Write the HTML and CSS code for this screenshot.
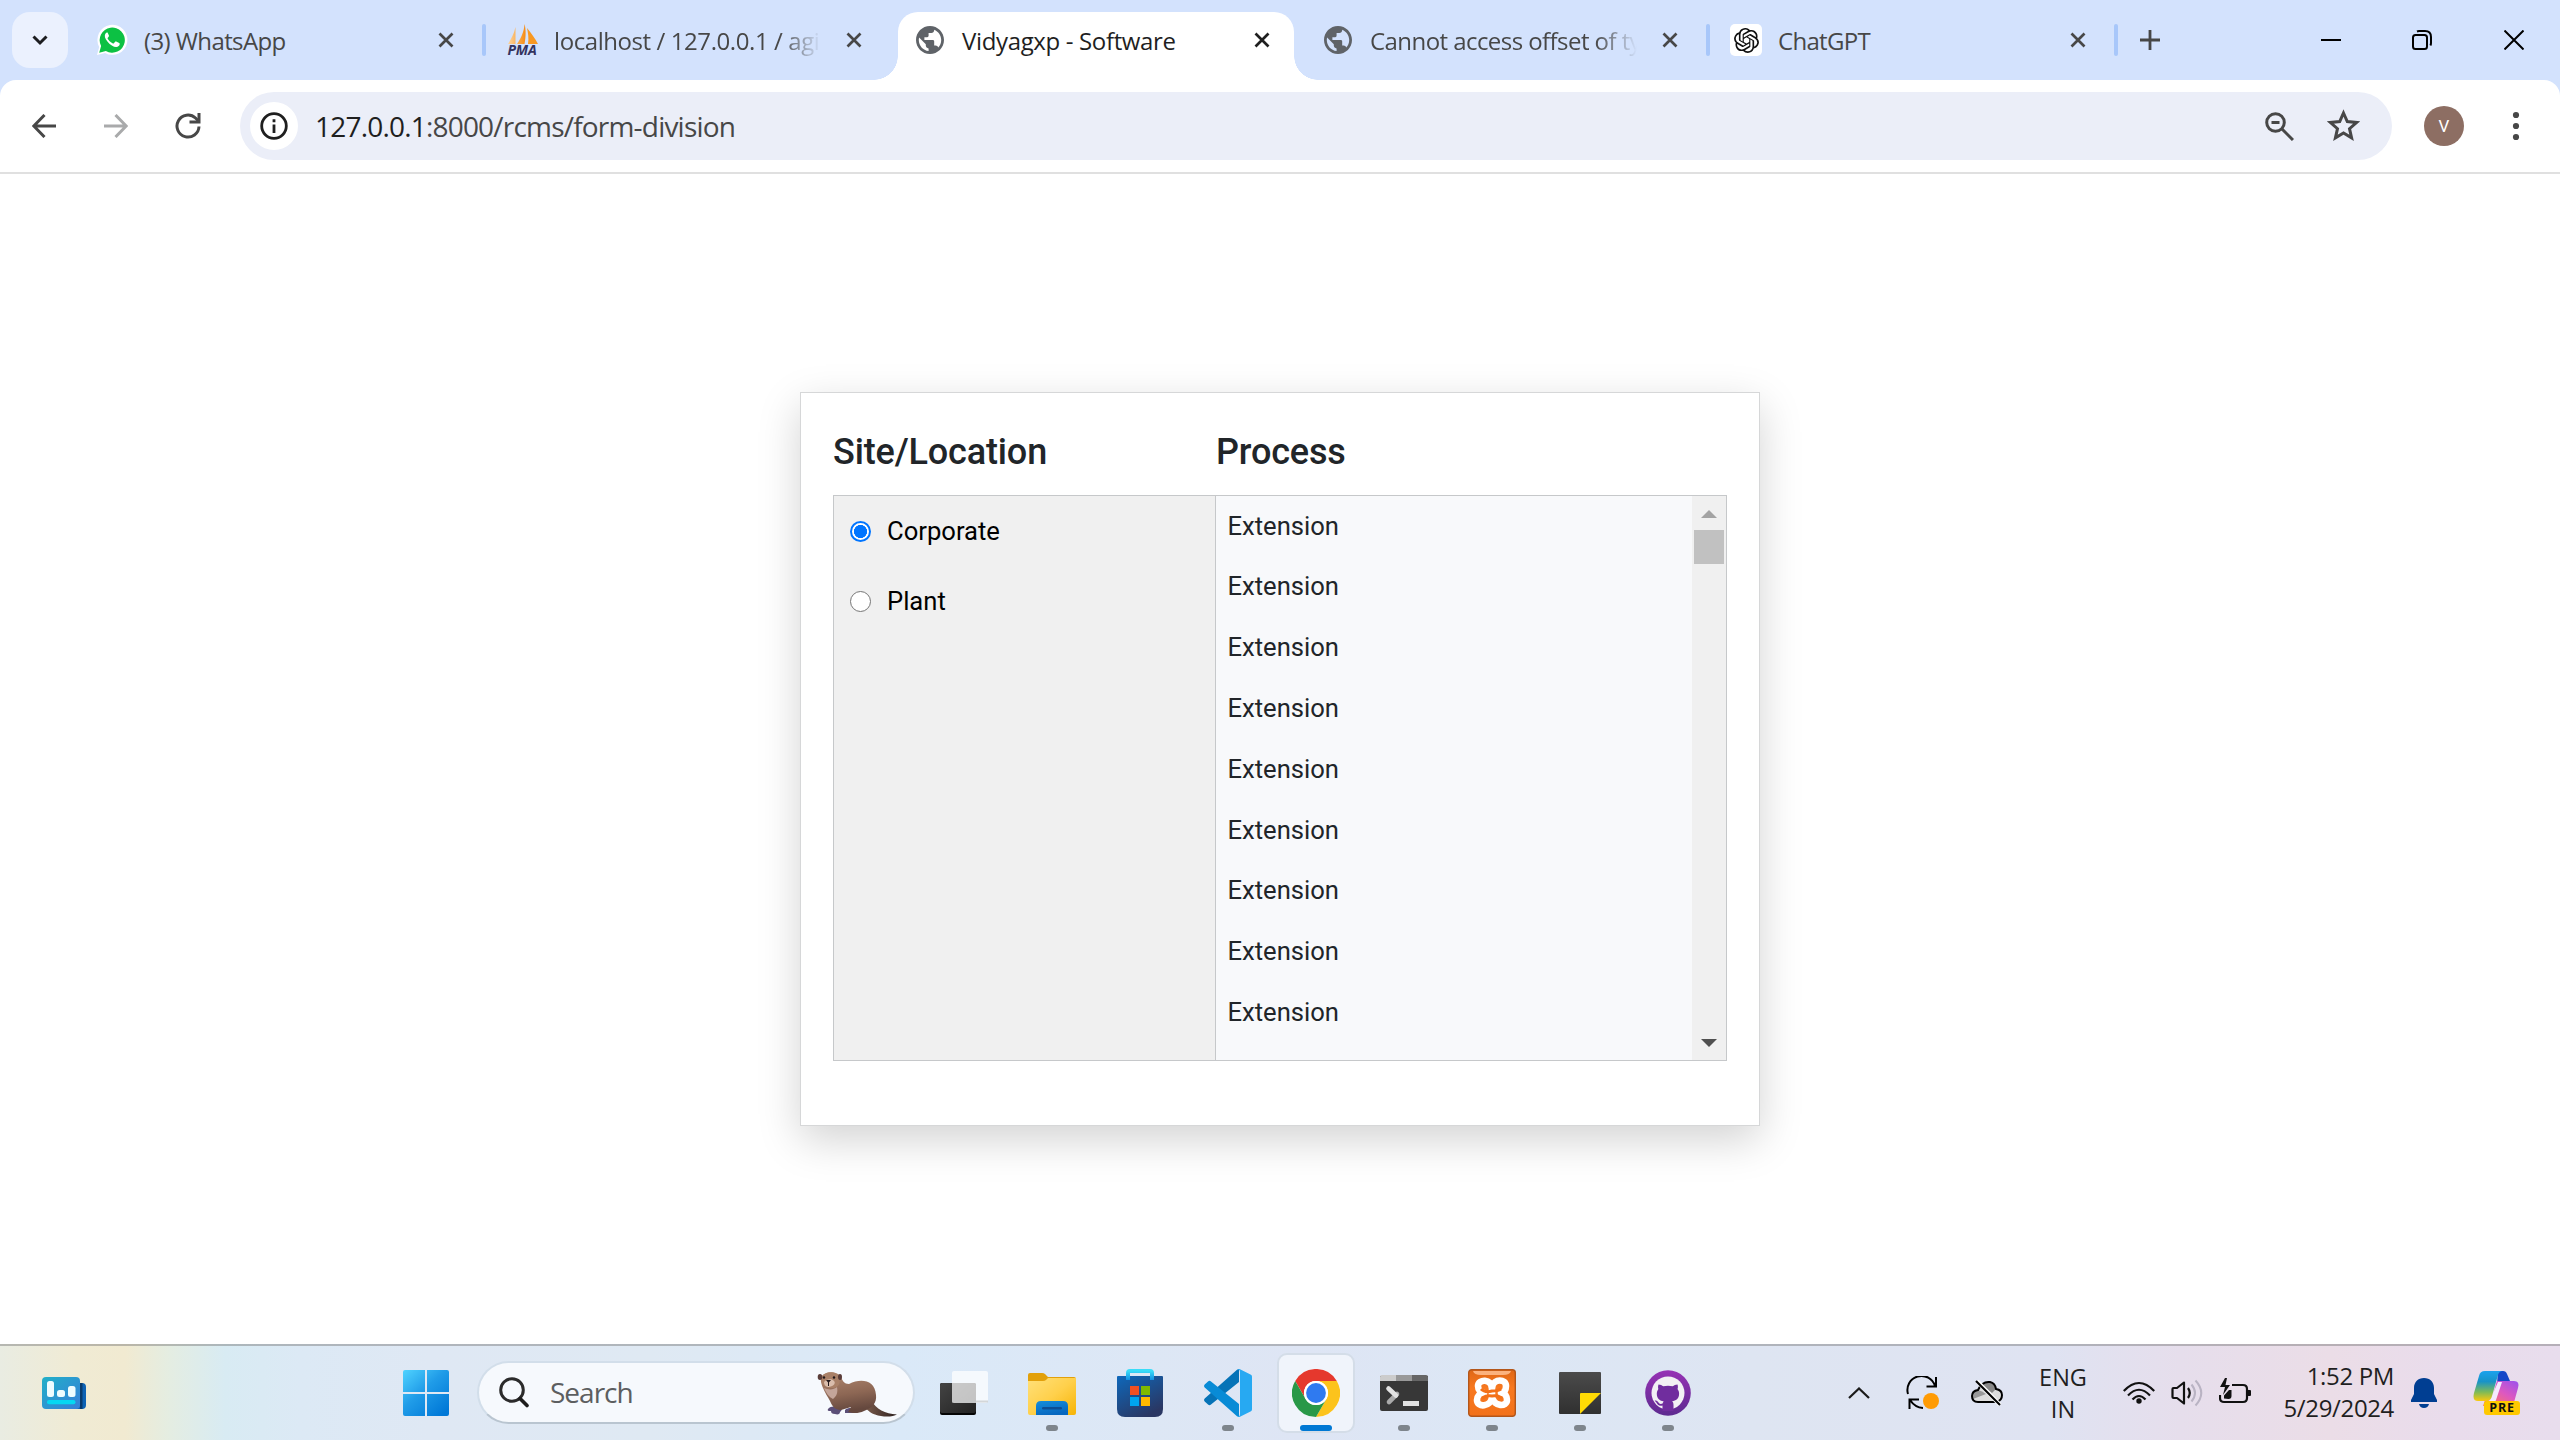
FILE: index.html
```html
<!DOCTYPE html>
<html lang="en">
<head>
<meta charset="utf-8">
<title>Vidyagxp - Software</title>
<link rel="stylesheet" href="styles.css">
</head>
<body>
<svg class="defs" width="0" height="0" aria-hidden="true">
  <symbol id="x" viewBox="0 0 16 16"><path d="M1.5 1.5l13 13M14.5 1.5l-13 13" fill="none" stroke="currentColor" stroke-width="2.7"/></symbol>
  <symbol id="globe" viewBox="2 2 20 20"><path fill="currentColor" d="M12 2C6.48 2 2 6.48 2 12s4.480 10 10 10 10-4.480 10-10S17.520 2 12 2zM4 12c0-.61.08-1.210.21-1.780L8.990 15v1c0 1.100.9 2 2 2v1.930C7.060 19.430 4 16.070 4 12zm13.890 5.400c-.26-.81-1-1.400-1.900-1.400h-1v-3c0-.55-.45-1-1-1h-6v-2h2c.55 0 1-.45 1-1V7h2c1.100 0 2-.9 2-2v-.41C17.920 5.770 20 8.650 20 12c0 2.080-.81 3.980-2.110 5.400z"/></symbol>
</svg>

<header class="tabstrip">
  <button class="tab-search"><svg width="16" height="11" viewBox="0 0 16 11"><path d="M1.500 1.500L8 8l6.500-6.500" fill="none" stroke="#1c1d20" stroke-width="3"/></svg></button>
  <div class="tab first">
    <span class="favicon"><svg width="32" height="32" viewBox="0 0 32 32"><path d="M1 31l2.200-8A15 15 0 1 1 9 28.900z" fill="#fff"/><path d="M3.200 28.800l1.900-6.800A12.600 12.600 0 1 1 9.900 27z" fill="#0cc143"/><path d="M11.200 8.500c-.6 0-1.300.4-1.800 1.200-1.200 2-.6 4.500 2 7.800 3 3.700 6.200 5.600 8.900 5.500 1.900-.1 3.300-1.500 3.400-2.700.1-.8 0-1-.5-1.300l-3-1.500c-.6-.2-.9-.1-1.300.4l-1 1.300c-.4.4-.8.4-1.400.1-2.300-1.100-3.700-2.600-4.800-4.500-.2-.5-.1-.8.300-1.200l.8-1.100c.3-.4.200-.8 0-1.200l-1-2.300c-.2-.5-.4-.6-.6-.5z" fill="#fff"/></svg></span>
    <span class="tab-title t-wa">(3) WhatsApp</span>
    <svg class="close" width="16" height="16"><use href="#x"/></svg>
    <i class="sep"></i>
  </div>
  <div class="tab">
    <span class="favicon pma"><svg width="32" height="20" viewBox="0 0 32 20"><defs><linearGradient id="sail"><stop stop-color="#fcd5a0"/><stop offset="1" stop-color="#f68b12"/></linearGradient></defs><path d="M1 20C4 15 7 10 8.500 3v17zM10 20C14 14 17 8 17.500 0c1.500 5 1.500 13 0 20z" fill="url(#sail)"/><path d="M20 4c4 5 8 10 11 16H21c1-6 0-11-1-16z" fill="#f89822"/></svg><b>PMA</b></span>
    <span class="tab-title fade t-pma">localhost / 127.0.0.1 / agi</span>
    <svg class="close" width="16" height="16"><use href="#x"/></svg>
  </div>
  <div class="tab active">
    <span class="favicon"><svg width="28" height="28"><use href="#globe"/></svg></span>
    <span class="tab-title t-vid">Vidyagxp - Software</span>
    <svg class="close" width="16" height="16"><use href="#x"/></svg>
  </div>
  <div class="tab">
    <span class="favicon"><svg width="28" height="28"><use href="#globe"/></svg></span>
    <span class="tab-title fade t-can">Cannot access offset of ty</span>
    <svg class="close" width="16" height="16"><use href="#x"/></svg>
    <i class="sep"></i>
  </div>
  <div class="tab">
    <span class="favicon gpt"><svg width="25" height="25" viewBox="0 0 24 24"><path fill="#111" d="M22.282 9.821a5.985 5.985 0 0 0-.516-4.910 6.046 6.046 0 0 0-6.510-2.900A6.065 6.065 0 0 0 4.981 4.182a5.985 5.985 0 0 0-3.998 2.900 6.046 6.046 0 0 0 .743 7.097 5.980 5.980 0 0 0 .511 4.911 6.051 6.051 0 0 0 6.515 2.900A5.985 5.985 0 0 0 13.260 24a6.056 6.056 0 0 0 5.772-4.206 5.990 5.990 0 0 0 3.998-2.900 6.056 6.056 0 0 0-.747-7.073zM13.260 22.430a4.476 4.476 0 0 1-2.876-1.040l.141-.081 4.779-2.758a.795.795 0 0 0 .392-.681v-6.737l2.020 1.168a.071.071 0 0 1 .038.052v5.583a4.504 4.504 0 0 1-4.494 4.494zM3.600 18.304a4.470 4.470 0 0 1-.535-3.014l.142.085 4.783 2.759a.771.771 0 0 0 .780 0l5.843-3.369v2.332a.080.080 0 0 1-.033.062L9.740 19.950a4.500 4.500 0 0 1-6.140-1.646zM2.341 7.896a4.485 4.485 0 0 1 2.366-1.973V11.600a.766.766 0 0 0 .388.677l5.814 3.354-2.020 1.168a.076.076 0 0 1-.071 0l-4.830-2.786A4.504 4.504 0 0 1 2.341 7.872zm16.596 3.855l-5.833-3.387L15.119 7.200a.076.076 0 0 1 .071 0l4.830 2.791a4.494 4.494 0 0 1-.676 8.105v-5.678a.790.790 0 0 0-.407-.667zm2.010-3.023l-.141-.085-4.774-2.782a.776.776 0 0 0-.785 0L9.409 9.230V6.897a.066.066 0 0 1 .028-.061l4.830-2.787a4.500 4.500 0 0 1 6.680 4.660zm-12.640 4.135l-2.020-1.164a.080.080 0 0 1-.038-.057V6.075a4.500 4.500 0 0 1 7.375-3.453l-.142.080L8.704 5.460a.795.795 0 0 0-.393.681zm1.097-2.365l2.602-1.500 2.607 1.500v2.999l-2.597 1.500-2.607-1.500z"/></svg></span>
    <span class="tab-title t-gpt">ChatGPT</span>
    <svg class="close" width="16" height="16"><use href="#x"/></svg>
    <i class="sep"></i>
  </div>
  <svg class="new-tab" width="20" height="20" viewBox="0 0 20 20"><path d="M10 0v20M0 10h20" stroke="#474747" stroke-width="2.800"/></svg>
  <div class="window-controls">
    <svg width="20" height="20" viewBox="0 0 20 20"><path d="M0 10h20" stroke="#000" stroke-width="2"/></svg>
    <svg width="20" height="20" viewBox="0 0 20 20"><g fill="none" stroke="#000" stroke-width="2"><rect x="1" y="5" width="14" height="14" rx="2.500"/><path d="M5 1.500Q6 1 7 1h6q6 0 6 6v6q0 1.500-.6 2.500"/></g></svg>
    <svg width="20" height="20" viewBox="0 0 20 20"><path d="M.5.5l19 19M19.500.5l-19 19" stroke="#000" stroke-width="2"/></svg>
  </div>
</header>

<div class="toolbar-back">
<nav class="toolbar">
  <svg class="nav-icon" width="24" height="24" viewBox="0 0 24 24"><path d="M24 12H2.500M12.500 1L1.800 12l10.700 11" fill="none" stroke="#474747" stroke-width="3"/></svg>
  <svg class="nav-icon" width="24" height="24" viewBox="0 0 24 24"><path d="M0 12h21.500M11.500 1l10.700 11-10.700 11" fill="none" stroke="#a9aaab" stroke-width="3"/></svg>
  <svg class="nav-icon" width="26" height="26" viewBox="0 0 26 26"><path d="M24 13.500A11 11 0 1 1 20.500 5l3 3" fill="none" stroke="#474747" stroke-width="3"/><path d="M14.500 10.500h11V0h-3v7.500h-8z" fill="#474747"/></svg>
  <div class="omnibox">
    <span class="site-info"><svg width="28" height="28" viewBox="0 0 28 28"><circle cx="14" cy="14" r="12.300" fill="none" stroke="#1f1f1f" stroke-width="2.800"/><path d="M14 12.500V21M14 7.300v3" stroke="#1f1f1f" stroke-width="2.800"/></svg></span>
    <span class="url"><b>127.0.0.1</b>:8000/rcms/form-division</span>
    <svg class="zoom-out" width="29" height="29" viewBox="0 0 29 29"><g fill="none" stroke="#474747" stroke-width="3"><circle cx="10.500" cy="10.500" r="8.800"/><path d="M17 17l11 11M6.500 10.500h8"/></g></svg>
    <svg class="star" width="33" height="32" viewBox="0 0 33 32"><path d="M16.500 4l3.800 8.600 9.200.9-7 6.200 2.100 9.200-8.100-4.900-8.100 4.900 2.100-9.200-7-6.200 9.200-.9z" fill="none" stroke="#474747" stroke-width="3"/></svg>
  </div>
  <span class="avatar">V</span>
  <svg class="menu-dots" width="8" height="30" viewBox="0 0 8 30" fill="#474747"><circle cx="4" cy="4" r="3.100"/><circle cx="4" cy="15" r="3.100"/><circle cx="4" cy="26" r="3.100"/></svg>
</nav>
</div>

<main class="page">
  <section class="card">
    <div class="headings"><h2 class="h-site">Site/Location</h2><h2 class="h-proc">Process</h2></div>
    <div class="panes">
      <div class="sites">
        <label><i class="radio on"></i><span>Corporate</span></label>
        <label><i class="radio"></i><span>Plant</span></label>
      </div>
      <div class="processes">
        <ul><li>Extension</li><li>Extension</li><li>Extension</li><li>Extension</li><li>Extension</li><li>Extension</li><li>Extension</li><li>Extension</li><li>Extension</li></ul>
        <div class="scrollbar">
          <svg width="16" height="8" viewBox="0 0 16 8"><path d="M0 8l8-8 8 8z" fill="#a3a3a3"/></svg>
          <i class="thumb"></i>
          <svg class="down" width="16" height="8" viewBox="0 0 16 8"><path d="M0 0l8 8 8-8z" fill="#505050"/></svg>
        </div>
      </div>
    </div>
  </section>
</main>

<footer class="taskbar">
  <div class="widgets">
    <svg width="44" height="32" viewBox="0 0 44 32"><defs><linearGradient id="wg" x2="1" y2="1"><stop stop-color="#21b0c8"/><stop offset="1" stop-color="#377fd9"/></linearGradient></defs><rect x="26" y="6" width="18" height="26" rx="4" fill="#0d62b4"/><path d="M38 6h2.500v26H38z" fill="#083a6c"/><rect width="38" height="32" rx="4" fill="url(#wg)"/><g fill="#effcff"><rect x="5" y="4" width="7" height="16" rx="2.500"/><rect x="15" y="13" width="8" height="7" rx="2.500"/><rect x="26" y="9" width="7.500" height="11" rx="2.500"/></g><rect x="5" y="23" width="28.500" height="4.300" rx="2" fill="#06d7f2"/></svg>
  </div>
  <svg class="start" width="46" height="46" viewBox="0 0 46 46"><defs><linearGradient id="win" gradientUnits="userSpaceOnUse" x1="0" y1="0" x2="40" y2="44"><stop stop-color="#50d3ff"/><stop offset=".48" stop-color="#209ce8"/><stop offset="1" stop-color="#0078d7"/></linearGradient></defs><path d="M2 0h20v22H0V2q0-2 2-2zM24 0h20q2 0 2 2v20H24zM0 24h22v22H2q-2 0-2-2zM24 24h22v20q0 2-2 2H24z" fill="url(#win)"/></svg>
  <div class="search">
    <svg width="30" height="31" viewBox="0 0 30 31"><circle cx="13" cy="13" r="11.300" fill="none" stroke="#2b2b2b" stroke-width="3"/><path d="M21 21.500l7 7" stroke="#1d1d1d" stroke-width="3.600" stroke-linecap="round"/></svg>
    <span class="search-text">Search</span>
    <svg class="otter" width="82" height="46" viewBox="0 0 82 46"><defs><linearGradient id="fur" x2=".2" y2="1"><stop stop-color="#b18972"/><stop offset=".6" stop-color="#8d6754"/><stop offset="1" stop-color="#65483e"/></linearGradient><linearGradient id="tail"><stop stop-color="#80604f"/><stop offset="1" stop-color="#2e211f"/></linearGradient></defs><path d="M54 29c5 9 14 14 26 14.500-4 2.500-14 3-22 0-6-2-9-6-12-10z" fill="url(#tail)"/><path d="M11 38c3-3 7-3 10-1 4-1 5 2 2 4 0 2-2 3-5 2-3 0-4-1-4-3-2 0-4 0-3-2zM28 39c3-3 8-2 12-1 1 2-1 4-4 4h-8z" fill="#5b4f78"/><path d="M5 5C9 0 20 0 23 5c3 5 4 8 9 8 12-6 26-4 27 11 1 8-4 13-12 16-6 3-12 2-16 1l3-5-10 3c-6 0-9-4-11-9-2-4-5-8-7-13C4 12 3 9 5 5z" fill="url(#fur)"/><path d="M7 17c4 2 10 2 13-1 1 5 0 9-4 12-4-2-7-6-9-11z" fill="#c4a599"/><path d="M4 7C7 0 20-1 22 7c2 6-1 10-7 10C8 17 4 13 4 7z" fill="#a98067"/><ellipse cx="3" cy="6" rx="2.300" ry="3" fill="#593c38"/><ellipse cx="23" cy="6" rx="2" ry="3" fill="#593c38"/><path d="M7 11c2-3 8-4 10-1 2 2 0 5-5 6-3 0-5-2-5-5z" fill="#d9bdac"/><path d="M9 9h5l-2.500 3zM11 11h1v4h-1z" fill="#241a1c"/><circle cx="7" cy="6.500" r="1.200" fill="#211719"/><circle cx="17" cy="6.500" r="1.200" fill="#211719"/></svg>
  </div>

  <div class="apps">
    <div class="app"><svg width="48" height="48" viewBox="0 0 48 48"><defs><linearGradient id="tv" x2="1" y2="1"><stop stop-color="#444"/><stop offset="1" stop-color="#222"/></linearGradient></defs><rect y="14" width="36" height="32" rx="2" fill="#050505"/><rect y="14" width="36" height="30" rx="2" fill="url(#tv)"/><rect x="12" y="2" width="36" height="32" rx="2" fill="#fff" fill-opacity=".72"/><path d="M12 32.500h36" stroke="#c5c7c9" stroke-opacity=".7" stroke-width="2"/></svg></div>
    <div class="app open"><svg width="48" height="48" viewBox="0 0 48 48"><defs><linearGradient id="fo" x2="1" y2="1"><stop stop-color="#ffe07a"/><stop offset=".5" stop-color="#ffd04b"/><stop offset="1" stop-color="#f6b406"/></linearGradient><linearGradient id="fb" x2=".4" y2="1"><stop stop-color="#158edc"/><stop offset="1" stop-color="#0768c0"/></linearGradient></defs><path d="M0 6q0-2 2-2h12q2 0 3 1l3 3h26q2 0 2 2v5H0z" fill="#e2a00a"/><path d="M0 12h15q2 0 3-1l2-2h28v35q0 2-2 2H2q-2 0-2-2z" fill="url(#fo)"/><path d="M8 46V37q0-5 5-5h22q5 0 5 5v9z" fill="url(#fb)"/><rect x="14" y="38" width="20" height="2.400" rx="1.200" fill="#0d4e94"/></svg></div>
    <div class="app"><svg width="48" height="48" viewBox="0 0 48 48"><defs><linearGradient id="st" x2=".6" y2="1"><stop stop-color="#0e68bb"/><stop offset="1" stop-color="#2a3763"/></linearGradient><linearGradient id="ha" x2="0" y2="1"><stop stop-color="#3adcf8"/><stop offset="1" stop-color="#0f8fe4"/></linearGradient></defs><path d="M2 7h44q1 0 1 1v32q0 8-8 8H9q-8 0-8-8V8q0-1 1-1z" fill="url(#st)"/><path d="M12 11V4q0-2 2-2h20q2 0 2 2v7" fill="none" stroke="url(#ha)" stroke-width="4"/><path d="M14 17h9v9h-9z" fill="#f25022"/><path d="M25 17h9v9h-9z" fill="#7fba00"/><path d="M14 28h9v9h-9z" fill="#00a4ef"/><path d="M25 28h9v9h-9z" fill="#ffb900"/></svg></div>
    <div class="app open"><svg width="48" height="48" viewBox="0 0 48 48"><path d="M35 0v13L7 35.500q-1.500 1.500-3 0L.7 32.500q-1.300-1.500 0-3L33 .8z" fill="#0673b7"/><path d="M35 48V35L7 12.500q-1.500-1.500-3 0L.7 15.500q-1.300 1.500 0 3L33 47.200z" fill="#088bd6"/><path d="M33 .7Q34.500-.5 36 .2l11 5.500q1 .5 1 2v32.600q0 1.500-1 2l-11 5.500q-1.500.7-3-.5 3 1 3-2.300V3Q36 0 33 .7z" fill="#27a9f2"/></svg></div>
    <div class="app current"><svg width="48" height="48" viewBox="0 0 48 48"><circle cx="24" cy="24" r="24" fill="#fff"/><path d="M3.200 12A24 24 0 0 1 44.800 12H24a12 12 0 0 0-10.400 18z" fill="#e5382d"/><path d="M44.800 12A24 24 0 0 1 24 48l10.400-18A12 12 0 0 0 24 12z" fill="#fcc31c"/><path d="M24 48A24 24 0 0 1 3.200 12l10.400 18a12 12 0 0 0 20.800 0z" fill="#299848"/><circle cx="24" cy="24" r="12" fill="#fff"/><circle cx="24" cy="24" r="9.900" fill="#2f7af0"/></svg></div>
    <div class="app open"><svg width="48" height="48" viewBox="0 0 48 48"><path d="M0 7h48v33q0 2-2 2H2q-2 0-2-2z" fill="#373737"/><path d="M0 12V8q0-2 2-2h14v6z" fill="#ccc"/><path d="M16 6h16v6H16z" fill="#999"/><path d="M32 6h14q2 0 2 2v4H32z" fill="#666"/><path d="M9 33l8-8" stroke="#aaa" stroke-width="4.600" stroke-linecap="round"/><path d="M8.500 19.500l7.500 7" stroke="#e2e2e2" stroke-width="4.600" stroke-linecap="round"/><path d="M23 32h16v5H23z" fill="#e2e2e2"/></svg></div>
    <div class="app open"><svg width="48" height="48" viewBox="0 0 48 48"><defs><linearGradient id="xa" x2="0" y2="1"><stop stop-color="#df6716"/><stop offset=".4" stop-color="#f87920"/><stop offset="1" stop-color="#f2711a"/></linearGradient></defs><rect x=".7" y=".7" width="46.600" height="46.600" rx="3" fill="url(#xa)" stroke="#b3561a" stroke-width="1.400"/><path d="M5 2h38q-1 4-8 4H13Q6 6 5 2z" fill="#fbb27e"/><g fill="none" stroke="#fff" stroke-width="6.600" stroke-linecap="round" stroke-linejoin="round"><path d="M24 20c0-11-14-10-14-3 0 4 3 7 6 7-4 0-7 3-7 7 0 8 14 7 15-3V18"/><path d="M24 18c2-9 14-8 14-1 0 4-2 7-5 7 4 0 6 3 6 7 0 7-13 7-15-3"/></g><path d="M13 20q4 4 11 2 6 0 9-2M14 29q5-3 10-2 5-1 10 2" fill="none" stroke="#f37118" stroke-width="3"/></svg></div>
    <div class="app open"><svg width="48" height="48" viewBox="0 0 48 48"><defs><linearGradient id="sn" x2="0" y2="1"><stop stop-color="#4b4b4b"/><stop offset="1" stop-color="#303030"/></linearGradient></defs><path d="M4 3h40q1 0 1 1v40q0 1-1 1H4q-1 0-1-1V4q0-1 1-1z" fill="url(#sn)"/><path d="M24 45V25q0-1 1-1h20z" fill="#ffda05"/></svg></div>
    <div class="app open"><svg width="46" height="46" viewBox="0 0 46 46"><defs><linearGradient id="gh" x2="0" y2="1"><stop stop-color="#9732b5"/><stop offset="1" stop-color="#5d2a90"/></linearGradient></defs><circle cx="23" cy="23" r="22.800" fill="url(#gh)"/><circle cx="23" cy="23" r="16.500" fill="#f2f0f4"/><path d="M13.500 14.500c2 0 3.500.9 4.800 1.800q4.700-1 9.400 0c1.300-.9 2.800-1.800 4.800-1.800.6 1.800.5 3.500 0 4.600 1.200 1.500 1.600 3 1.600 4.700 0 5.300-3.300 7-7 7.500 1 1 1.400 2 1.400 3.800V41h-11v-5.500c-3.800.8-5-1-6-2.800-.6-1-1.500-1.500-1.800-2 2-.8 3 .8 4 2 .9 1.200 2 1.500 3.900.9.100-1 .6-1.700 1.100-2.200-3.700-.5-6.900-2.300-6.900-7.600 0-1.700.5-3.200 1.600-4.700-.5-1.100-.5-2.800.1-4.600z" fill="#702d9e"/></svg></div>
  </div>

  <div class="tray">
    <span class="cell"><svg width="22" height="12" viewBox="0 0 22 12"><path d="M1 11L11 1.500 21 11" fill="none" stroke="#1b1b1b" stroke-width="2.200"/></svg></span>
    <span class="cell"><svg width="34" height="34" viewBox="0 0 34 34"><path d="M2 18A14 14 0 0 1 29 10M30 1v9.500H20.500M3.500 33v-9.500H13M4 24q5 7.500 13 8" fill="none" stroke="#000" stroke-width="2"/><circle cx="25" cy="25" r="8" fill="#ff9b05"/></svg></span>
    <span class="cell"><svg width="32" height="26" viewBox="0 0 32 26"><path d="M7 22q-6 0-6-6 0-5 6-6Q11 1 19 2q5 1 6 7 6 1 6 6t-5 7z" fill="#ddd"/><path d="M2 19Q0 12 7 10q4 1 8 4z" fill="#999"/><path d="M11 5Q20-2 25 9l-4 4z" fill="#888"/><path d="M7 22q-6 0-6-6 0-5 6-6Q11 1 19 2q5 1 6 7 6 1 6 6t-5 7z" fill="none" stroke="#000" stroke-width="2"/><path d="M6 1l23 24" stroke="#fff" stroke-width="4"/><path d="M5 1l24 24" stroke="#000" stroke-width="2.200"/></svg></span>
    <span class="lang"><span class="l1">ENG</span><span class="l2">IN</span></span>
    <span class="cell"><svg width="32" height="24" viewBox="0 0 32 24"><g fill="none" stroke="#111" stroke-width="2.200"><path d="M.8 10Q16-6 31.200 10M5 14.500q11-11.500 22 0M9.500 18.500q6.500-7 13 0"/></g><circle cx="16" cy="20" r="2.700" fill="#111"/></svg></span>
    <svg width="32" height="28" viewBox="0 0 32 28"><path d="M1.500 10v8q0 1 1 1H6l7 5.500V3.500L6 9H2.500q-1 0-1 1z" fill="none" stroke="#111" stroke-width="2.200" stroke-linejoin="round"/><path d="M17 9q3.500 5 0 10" fill="none" stroke="#111" stroke-width="2.200"/><path d="M20.500 5.500q7 8.500 0 17M24.500 1.500q11.500 12.500 0 25" fill="none" stroke="#b9b3c3" stroke-width="2"/></svg>
    <svg class="battery" width="32" height="26" viewBox="0 0 32 26"><path d="M13 7h11q4 0 4 4v9q0 4-4 4H5q-4 0-4-4v-3" fill="none" stroke="#111" stroke-width="2.200"/><path d="M28 12h3q1 0 1 1v4q0 1-1 1h-3zM5 20.500v-3L10 12h2.500v6q0 3-3 3zM6 0L1 9h5l-2 8L11 7H6.500L8 0z" fill="#111"/></svg>
    <span class="clock"><span class="c1">1:52 PM</span><span class="c2">5/29/2024</span></span>
    <svg class="bell" width="26" height="30" viewBox="0 0 26 30"><path d="M13 0c6 0 10 4 10 10v6l3 6v2H0v-2l3-6v-6C3 4 7 0 13 0zM8 26h10q-1 4-5 4t-5-4z" fill="#003e92"/></svg>
    <span class="copilot"><svg width="47" height="46" viewBox="0 0 47 46"><defs><linearGradient id="co" x2="0" y2="1"><stop stop-color="#1ba2ee"/><stop offset=".35" stop-color="#1893c8"/><stop offset=".7" stop-color="#7dba58"/><stop offset="1" stop-color="#fbc90d"/></linearGradient><linearGradient id="cp" x1="1" x2=".2" y2="1"><stop stop-color="#9b51ee"/><stop offset=".5" stop-color="#dd58c0"/><stop offset="1" stop-color="#ff795a"/></linearGradient></defs><path d="M25 1h5q3 0 4 3l3 7h-8l-5 3z" fill="#1547c8"/><path d="M24 11h17q6 0 4 7l-5 18H10l2-6h4q3 0 4-4l3-12z" fill="url(#cp)"/><path d="M25 12h4l-6 18q-1 3-4 3l-5-2q3 0 4-3z" fill="#f5eaff"/><path d="M12 1h18q-4 0-5 4l-6 21q-1 5-6 5H5q-6 0-4-8L6 6q1-5 6-5z" fill="url(#co)"/></svg><b class="pre">PRE</b></span>
  </div>
</footer>
</body>
</html>
```
FILE: styles.css
```css
* { box-sizing: border-box; }
body {
  margin: 0; width: 2560px; height: 1440px; overflow: hidden;
  display: flex; flex-direction: column;
  background: #fff; color: #1f1f1f;
  font-family: "Open Sans", "Noto Sans", sans-serif;
}
svg { display: block; flex: none; }
.defs { position: absolute; }

/* Tab strip */
.tabstrip { flex: none; height: 80px; background: #d3e2fd; display: flex; align-items: center; padding-left: 12px; }
.tab-search { width: 56px; height: 56px; margin: 0 14px 0 0; border: 0; border-radius: 18px; background: #ebf1fe; display: flex; align-items: center; justify-content: center; }
.tab { position: relative; width: 408px; height: 68px; margin-top: 12px; padding: 0 0 12px 16px; display: flex; align-items: center; color: #474747; }
.favicon { width: 32px; height: 32px; margin-right: 16px; flex: none; display: flex; align-items: center; justify-content: center; color: #5f6368; }
.gpt { background: #fff; border-radius: 5px; }
.first { padding-left: 14px; }
.first .close { margin-left: 26px; }
.pma { flex-direction: column; justify-content: flex-start; }
.pma svg { margin-left: 2px; }
.pma b { font: italic 700 14px/12px "Open Sans", sans-serif; color: #33335f; letter-spacing: -.2px; }
.tab-title { width: 268px; padding-top: 2px; font-size: 24px; line-height: 34px; white-space: nowrap; }
.t-wa { letter-spacing: -.6px; }
.t-pma { letter-spacing: -.42px; }
.t-vid { letter-spacing: -.35px; }
.t-can { letter-spacing: -.56px; }
.t-gpt { letter-spacing: -.7px; }
.fade { -webkit-mask-image: linear-gradient(90deg, #000 225px, transparent 267px); mask-image: linear-gradient(90deg, #000 225px, transparent 267px); }
.close { margin-left: 24px; color: #474747; }
.sep { width: 4px; height: 32px; border-radius: 2px; background: #a8c7fa; margin-left: 28px; }
.active { width: 396px; margin-right: 12px; background: #fff; border-radius: 20px 20px 0 0; color: #1f1f1f; }
.active .close { color: #1f1f1f; }
.active::before, .active::after { content: ""; position: absolute; bottom: 0; width: 24px; height: 24px; }
.active::before { left: -24px; background: radial-gradient(circle at 0 0, transparent 23.5px, #fff 24px); }
.active::after { right: -24px; background: radial-gradient(circle at 100% 0, transparent 23.5px, #fff 24px); }
.new-tab { margin-left: 18px; }
.window-controls { margin-left: auto; margin-right: 36px; display: flex; gap: 72px; }
.window-controls svg:first-child { margin-right: -1px; }

/* Toolbar */
.toolbar-back { flex: none; background: #d3e2fd; }
.toolbar { height: 94px; padding: 0 40px 0 32px; background: #fff; border-bottom: 2px solid #e0e0e0; border-radius: 16px 16px 0 0; display: flex; align-items: center; }
.nav-icon { margin-right: 48px; }
.nav-icon + .nav-icon { margin-right: 47px; }
.nav-icon + .nav-icon + .nav-icon { margin-right: 39px; }
.omnibox { width: 2152px; height: 68px; border-radius: 34px; background: #ebeef8; display: flex; align-items: center; padding-left: 10px; }
.site-info { width: 48px; height: 48px; border-radius: 50%; background: #fff; display: flex; align-items: center; justify-content: center; }
.url { margin-left: 17px; font-size: 28px; line-height: 40px; letter-spacing: -.8px; color: #474747; white-space: nowrap; }
.url b { font-weight: 400; color: #1f1f1f; }
.zoom-out { margin-left: auto; }
.star { margin: 0 32px 2px 33px; }
.avatar { width: 40px; height: 40px; margin: 0 auto 0 32px; border-radius: 50%; background: #8d6e63; color: #fff; font: 17px/40px Roboto, sans-serif; text-align: center; }

/* Page */
.page { flex: 1; padding-top: 218px; display: flex; justify-content: center; align-items: flex-start; }
.card { width: 960px; height: 734px; padding: 35px 32px 0; border: 1px solid #d6d7d8; background: #fff; box-shadow: 0 14px 40px rgba(0,0,0,.175); font-family: Roboto, sans-serif; }
.headings { display: grid; grid-template-columns: 383px 1fr; height: 67px; }
h2 { margin: 0; font-size: 36px; line-height: 49px; letter-spacing: -.15px; font-weight: 500; color: #212529; white-space: nowrap; }
.panes { height: 566px; border: 1px solid #c6c8ca; display: grid; grid-template-columns: 381px 1fr; }
.sites { background: #f0f0f0; padding: 0 0 0 16px; color: #000; font-size: 25.600px; }
.sites label { display: flex; align-items: center; height: 70px; gap: 16px; }
.radio { width: 21px; height: 21px; border: 1.500px solid #767676; border-radius: 50%; background: #fff; }
.radio.on { border: 2px solid #0075ff; background: radial-gradient(circle, #0075ff 6.3px, #fff 6.8px); }
.processes { border-left: 1px solid #c6c8ca; background: #f8f9fb; display: flex; overflow: hidden; }
ul { list-style: none; margin: -.4px 0 0; padding: 0 0 0 11.500px; flex: 1; color: #212529; font-size: 25.600px; line-height: 60.800px; }
.scrollbar { width: 34px; background: #f0f0f0; padding: 14px 0 13px; display: flex; flex-direction: column; align-items: center; }
.thumb { width: 30px; height: 34px; margin-top: 12px; background: #c1c1c1; }
.down { margin-top: auto; }

/* Taskbar */
.taskbar {
  flex: none; height: 96px; border-top: 2px solid rgba(120,120,120,.45); display: flex; align-items: center;
  background: linear-gradient(90deg, #e9ece2 0, #f0ebd4 75px, #f1ead1 125px, #e4ede2 170px, #d8ebf3 225px, #dce9f5 300px, #dfe8f4 430px, #dfe9f3 650px, #dae9f8 900px, #dde7f5 1150px, #dee5f4 1300px, #dce7f5 1500px, #dee5f2 1750px, #dfe3f2 2050px, #e6deec 2180px, #ebdde7 2330px, #e9dcec 2450px, #e8dded 2560px) border-box;
}
.widgets { width: 403px; padding-left: 42px; }
.start { margin-right: 28px; }
.search { width: 438px; height: 63px; margin: 0 5px 2px 0; padding: 0 14px 0 20px; border: 2px solid #d2deea; border-bottom-color: #b9c5d0; border-radius: 32px; background: #f6f9fd; display: flex; align-items: center; }
.search-text { margin-left: 21px; font-size: 28px; line-height: 40px; letter-spacing: -1px; color: #5c5e60; }
.otter { margin-left: auto; margin-top: 4px; }
.apps { z-index: 0; display: grid; grid-template-columns: repeat(9, 88px); }
.app { position: relative; height: 76px; display: flex; align-items: center; justify-content: center; }
.open::after, .current::after { content: ""; position: absolute; bottom: 0; left: 38px; width: 12px; height: 6px; border-radius: 3px; background: #7e858c; }
.current::after { left: 28px; width: 32px; background: #0078d4; }
.current::before { content: ""; position: absolute; z-index: -1; inset: -2px 5px; border: 2px solid #d4dde8; border-radius: 10px; background: #f0f4fb; }
.tray { margin-left: auto; padding-right: 40px; display: flex; align-items: center; }
.cell { width: 64px; display: flex; justify-content: center; }
.lang { width: 88px; display: flex; flex-direction: column; align-items: center; font-size: 23.500px; line-height: 32px; }
.battery { margin: -4px 0 0 16px; }
.clock { width: 143px; margin: -2px -1px 0 0; display: flex; flex-direction: column; align-items: flex-end; font-size: 24px; line-height: 32px; letter-spacing: -.35px; white-space: nowrap; }
.bell { margin-left: 18px; }
.copilot { position: relative; margin-left: 36px; }
.pre { position: absolute; left: 11px; top: 31px; width: 36px; height: 14px; border-radius: 3px; background: #ffc800; font-size: 12.500px; line-height: 14px; letter-spacing: .8px; text-align: center; color: #111; }
```
